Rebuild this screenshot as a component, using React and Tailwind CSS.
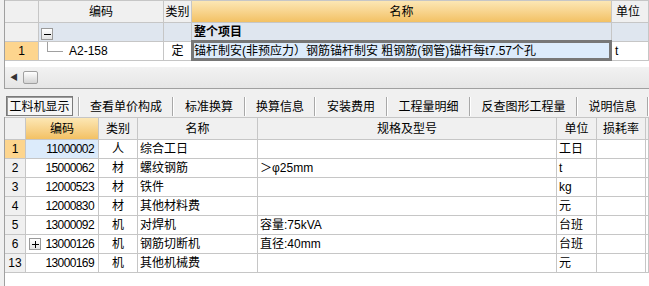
import React from 'react';

// 网格线颜色
const line = 'border-[#c6c6c6]';

const Cell = ({ className = '', children }) => (
  <div className={`shrink-0 h-full border-r ${line} flex items-center overflow-hidden whitespace-nowrap ${className}`}>
    {children}
  </div>
);

const TreeBox = ({ sign }) => (
  <span className="w-[12px] h-[12px] border border-[#9a9a9a] bg-gradient-to-b from-white to-[#e2e2e2] flex items-center justify-center shrink-0">
    <span className="relative w-[7px] h-[7px] flex items-center justify-center">
      <span className="absolute w-[7px] h-px bg-black" />
      {sign === '+' && <span className="absolute h-[7px] w-px bg-black" />}
    </span>
  </span>
);

const rows = [
  { n: '1', code: '11000002', t: '人', name: '综合工日', spec: '', unit: '工日', sel: true },
  { n: '2', code: '15000062', t: '材', name: '螺纹钢筋', spec: '＞φ25mm', unit: 't' },
  { n: '3', code: '12000523', t: '材', name: '铁件', spec: '', unit: 'kg' },
  { n: '4', code: '12000830', t: '材', name: '其他材料费', spec: '', unit: '元' },
  { n: '5', code: '13000092', t: '机', name: '对焊机', spec: '容量:75kVA', unit: '台班' },
  { n: '6', code: '13000126', t: '机', name: '钢筋切断机', spec: '直径:40mm', unit: '台班', plus: true },
  { n: '13', code: '13000169', t: '机', name: '其他机械费', spec: '', unit: '元' },
];

const tabs = [
  { label: '查看单价构成', w: 'w-[92px]' },
  { label: '标准换算', w: 'w-[70px]' },
  { label: '换算信息', w: 'w-[68px]' },
  { label: '安装费用', w: 'w-[70px]' },
  { label: '工程量明细', w: 'w-[81px]' },
  { label: '反查图形工程量', w: 'w-[105px]' },
  { label: '说明信息', w: 'w-[69px]' },
];

const Sep = () => <div className="shrink-0 w-[2px] h-[19px] border-l border-[#a8a8a8] border-r border-r-white" />;

export default function App() {
  return (
    <div className="w-[649px] h-[286px] overflow-hidden bg-[#f0f0f0] text-[12px] leading-none text-black font-['Liberation_Sans','Noto_Sans_CJK_SC',sans-serif]">
      {/* 上部定额表 */}
      <div className="pl-[4px] h-[89px]">
        <div className="h-full border-l border-b border-[#a0a0a0] flex flex-col">
          <div className={`h-[23px] flex border-t border-b ${line} bg-[#f0f0f0]`}>
            <Cell className="w-[34px]" />
            <Cell className="w-[125px] justify-center">编码</Cell>
            <Cell className="w-[28px] justify-center">类别</Cell>
            <Cell className="w-[420px] justify-center bg-gradient-to-b from-[#fce7b4] to-[#f3c163]">名称</Cell>
            <Cell className="flex-1 pl-[4px]">单位</Cell>
          </div>
          <div className={`h-[19px] flex border-b ${line}`}>
            <Cell className="w-[34px] bg-[#f0f0f0]" />
            <Cell className="w-[125px] bg-[#dfe6ef] pl-[2px] items-end pb-[1px]">
              <TreeBox sign="-" />
            </Cell>
            <Cell className="w-[28px] bg-[#dfe6ef]" />
            <Cell className="w-[420px] bg-[#dfe6ef] pl-[2px] font-bold">整个项目</Cell>
            <Cell className="flex-1 bg-[#dfe6ef]" />
          </div>
          <div className={`h-[19px] flex border-b ${line} bg-white`}>
            <Cell className="w-[34px] bg-[#fdd58e] justify-center">1</Cell>
            <Cell className="w-[125px] relative pl-[30px]">
              <span className="absolute left-[8px] -top-[2px] h-[12px] w-px bg-[#a0a0a0]" />
              <span className="absolute left-[8px] top-[9px] w-[16px] h-px bg-[#a0a0a0]" />
              A2-158
            </Cell>
            <Cell className="w-[28px] justify-center">定</Cell>
            <Cell className="w-[420px] relative bg-[#dcebfb] pl-[2px] overflow-visible">
              <span className="absolute -left-px -top-[2px] -bottom-px -right-px border-[3px] border-[#777777]" />
              锚杆制安(非预应力）钢筋锚杆制安 粗钢筋(钢管)锚杆每t7.57个孔
            </Cell>
            <Cell className="flex-1 pl-[3px]">t</Cell>
          </div>
          <div className="h-[6px] bg-white" />
          <div className="flex-1 bg-gradient-to-b from-[#f2f2f2] to-[#e6e6e6] flex items-center">
            <span className="w-[18px] flex justify-center text-[8px] text-[#333]">◀</span>
            <span className="w-[15px] h-[13px] rounded-[2px] border border-[#a0a0a0] bg-gradient-to-b from-white to-[#d4d4d4]" />
          </div>
        </div>
      </div>

      {/* 标签栏 */}
      <div className="h-[28px] flex items-end pb-px">
        <div className="ml-[6px] w-[70px] h-[20px] pt-[2px] border border-[#7a7a7a] shadow-[inset_1px_1px_0_#9a9a9a] bg-[#f6f6f6] flex items-center justify-center">
          工料机显示
        </div>
        <div className="w-[5px]" />
        <Sep />
        {tabs.map((t) => (
          <React.Fragment key={t.label}>
            <div className={`${t.w} h-[20px] pt-[2px] flex items-center justify-center shrink-0`}>{t.label}</div>
            <Sep />
          </React.Fragment>
        ))}
      </div>

      {/* 工料机表 */}
      <div className="pl-[4px] h-[169px]">
        <div className="h-full border-l border-[#a0a0a0] bg-white">
          <div className={`h-[23px] flex border-t border-b ${line} bg-[#f0f0f0]`}>
            <Cell className="w-[21px]" />
            <Cell className="w-[73px] justify-center bg-gradient-to-b from-[#fce7b4] to-[#f3c163]">编码</Cell>
            <Cell className="w-[39px] justify-center">类别</Cell>
            <Cell className="w-[120px] justify-center">名称</Cell>
            <Cell className="w-[299px] justify-center">规格及型号</Cell>
            <Cell className="w-[40px] justify-center">单位</Cell>
            <Cell className="w-[49px] justify-center">损耗率</Cell>
            <Cell className="flex-1" />
          </div>
          {rows.map((r) => (
            <div key={r.n} className={`h-[19px] flex border-b ${line}`}>
              <Cell className={`w-[21px] justify-center ${r.sel ? 'bg-[#fdd58e]' : 'bg-[#f0f0f0]'}`}>{r.n}</Cell>
              <Cell className={`w-[73px] justify-between pl-[3px] pr-[4px] ${r.sel ? 'bg-[#dcebfb]' : ''}`}>
                <span>{r.plus && <TreeBox sign="+" />}</span>
                <span className="tracking-[-0.6px]">{r.code}</span>
              </Cell>
              <Cell className="w-[39px] justify-center">{r.t}</Cell>
              <Cell className="w-[120px] pl-[2px]">{r.name}</Cell>
              <Cell className="w-[299px] pl-[2px]">{r.spec}</Cell>
              <Cell className="w-[40px] pl-[2px]">{r.unit}</Cell>
              <Cell className="w-[49px]" />
              <Cell className="flex-1" />
            </div>
          ))}
        </div>
      </div>
    </div>
  );
}
